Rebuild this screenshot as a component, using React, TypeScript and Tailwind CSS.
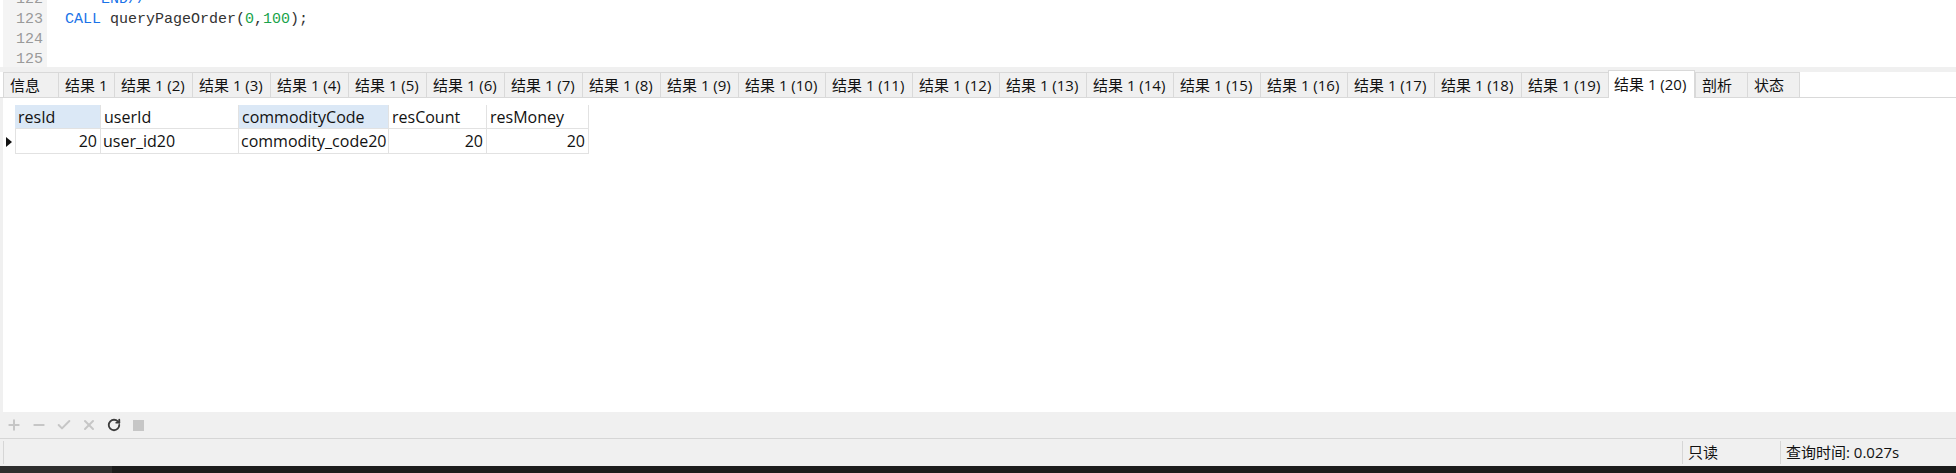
import React from 'react';
import { Plus, Minus, Check, X, RotateCw } from 'lucide-react';

const ui = "font-['Open_Sans','Noto_Sans_CJK_SC',sans-serif]";

const tabs = [
  { label: '信息', w: 'w-[55px]' },
  { label: '结果 1', w: 'w-[56px]' },
  { label: '结果 1 (2)', w: 'w-[78px]' },
  { label: '结果 1 (3)', w: 'w-[78px]' },
  { label: '结果 1 (4)', w: 'w-[78px]' },
  { label: '结果 1 (5)', w: 'w-[78px]' },
  { label: '结果 1 (6)', w: 'w-[78px]' },
  { label: '结果 1 (7)', w: 'w-[78px]' },
  { label: '结果 1 (8)', w: 'w-[78px]' },
  { label: '结果 1 (9)', w: 'w-[78px]' },
  { label: '结果 1 (10)', w: 'w-[87px]' },
  { label: '结果 1 (11)', w: 'w-[87px]' },
  { label: '结果 1 (12)', w: 'w-[87px]' },
  { label: '结果 1 (13)', w: 'w-[87px]' },
  { label: '结果 1 (14)', w: 'w-[87px]' },
  { label: '结果 1 (15)', w: 'w-[87px]' },
  { label: '结果 1 (16)', w: 'w-[87px]' },
  { label: '结果 1 (17)', w: 'w-[87px]' },
  { label: '结果 1 (18)', w: 'w-[87px]' },
  { label: '结果 1 (19)', w: 'w-[87px]' },
  { label: '结果 1 (20)', w: 'w-[87px]', active: true },
  { label: '剖析', w: 'w-[52px]' },
  { label: '状态', w: 'w-[53px]' },
];

const columns = [
  { name: 'resId', w: 'w-[86px]', hl: true },
  { name: 'userId', w: 'w-[138px]' },
  { name: 'commodityCode', w: 'w-[150px]', hl: true },
  { name: 'resCount', w: 'w-[98px]' },
  { name: 'resMoney', w: 'w-[102px]' },
];

const row = [
  { v: '20', right: true },
  { v: 'user_id20' },
  { v: 'commodity_code20' },
  { v: '20', right: true },
  { v: '20', right: true },
];

function Editor() {
  const lines: React.ReactNode[] = [
    <span className="text-[#1a73e8]">{'    END//'}</span>,
    <>
      <span className="text-[#1a73e8]">CALL</span> queryPageOrder(
      <span className="text-[#1aa34a]">0</span>,<span className="text-[#1aa34a]">100</span>);
    </>,
    '',
    '',
  ];
  return (
    <div className="h-[67px] overflow-hidden flex bg-white pl-[3px] font-['Liberation_Mono',monospace] text-[15px]">
      <div className="w-[44px] bg-[#f4f4f4] text-[#9a9a9a] text-right pr-[4px]">
        <div className="-mt-[10px]">
          {[122, 123, 124, 125].map((n) => (
            <div key={n} className="h-[20px] leading-[20px]">{n}</div>
          ))}
        </div>
      </div>
      <div className="flex-1 pl-[18px] text-[#333] whitespace-pre">
        <div className="-mt-[10px]">
          {lines.map((l, i) => (
            <div key={i} className="h-[20px] leading-[20px]">{l}</div>
          ))}
        </div>
      </div>
    </div>
  );
}

function TabBar() {
  return (
    <div className={`h-[26px] flex items-end bg-white border-b border-[#d9d9d9] pl-[3px] text-[15px] text-[#111] ${ui}`}>
      {tabs.map((t, i) =>
        t.active ? (
          <div
            key={i}
            className={`${t.w} h-[28px] -mb-px bg-white border-l border-t border-r border-[#d9d9d9] pl-[5px] flex items-center whitespace-nowrap`}
          >
            {t.label}
          </div>
        ) : (
          <div
            key={i}
            className={`${t.w} h-[25px] bg-[#f0f0f0] border-l border-t border-[#d9d9d9] pl-[6px] flex items-center whitespace-nowrap ${i === tabs.length - 1 ? 'border-r' : ''}`}
          >
            {t.label}
          </div>
        )
      )}
    </div>
  );
}

function Grid() {
  return (
    <div className={`flex-1 bg-white border-l-[3px] border-[#f0f0f0] pt-[7px] text-[16px] text-[#111] ${ui}`}>
      <div className="flex h-[24px]">
        <div className="w-[12px]" />
        {columns.map((c) => (
          <div
            key={c.name}
            className={`${c.w} h-full border-r border-b border-[#e2e2e2] pl-[3px] flex items-center ${c.hl ? 'bg-[#dbe8f6]' : 'bg-white'}`}
          >
            {c.name}
          </div>
        ))}
      </div>
      <div className="flex h-[25px]">
        <div className="w-[12px] flex items-center pl-[3px]">
          <svg width="6" height="10" viewBox="0 0 6 10">
            <path d="M0 0 L6 5 L0 10 Z" fill="#111" />
          </svg>
        </div>
        {row.map((c, i) => (
          <div
            key={i}
            className={`${columns[i].w} h-full border-r border-b border-[#e2e2e2] flex items-center ${c.right ? 'justify-end pr-[3px]' : 'pl-[2px]'} ${i === 0 ? 'border-l' : ''}`}
          >
            {c.v}
          </div>
        ))}
      </div>
    </div>
  );
}

function Toolbar() {
  const dim = '#c6c6c6';
  return (
    <div className="h-[27px] bg-[#f0f0f0] border-b border-[#d6d6d6] flex items-center pl-[6px] gap-[9px]">
      <Plus size={16} strokeWidth={3} color={dim} />
      <Minus size={16} strokeWidth={3} color={dim} />
      <Check size={16} strokeWidth={3} color={dim} />
      <X size={16} strokeWidth={3} color={dim} />
      <RotateCw size={14} strokeWidth={3.2} color="#3c3c3c" className="mx-px" />
      <div className="w-[11px] h-[11px] ml-[2px] bg-[#c6c6c6]" />
    </div>
  );
}

function StatusBar() {
  return (
    <div className={`h-[27px] bg-[#f0f0f0] flex pl-[3px] text-[15px] text-[#111] ${ui}`}>
      <div className="flex-1 border-l border-[#d6d6d6] my-[2px]" />
      <div className="w-[98px] border-l border-[#d6d6d6] my-[2px] pl-[5px] flex items-center">只读</div>
      <div className="w-[176px] border-l border-[#d6d6d6] my-[2px] pl-[5px] flex items-center">查询时间: 0.027s</div>
    </div>
  );
}

function Taskbar() {
  return (
    <div className="h-[7px] flex">
      <div className="w-[112px] bg-[#2e2e2e]" />
      <div className="w-[284px] bg-[#1c1c1c]" />
      <div className="flex-1 bg-[#1c1c1c]" />
    </div>
  );
}

export default function App() {
  return (
    <div className="w-[1956px] h-[473px] flex flex-col bg-white overflow-hidden">
      <Editor />
      <div className="h-[5px] bg-[#f0f0f0]" />
      <TabBar />
      <Grid />
      <Toolbar />
      <StatusBar />
      <Taskbar />
    </div>
  );
}
